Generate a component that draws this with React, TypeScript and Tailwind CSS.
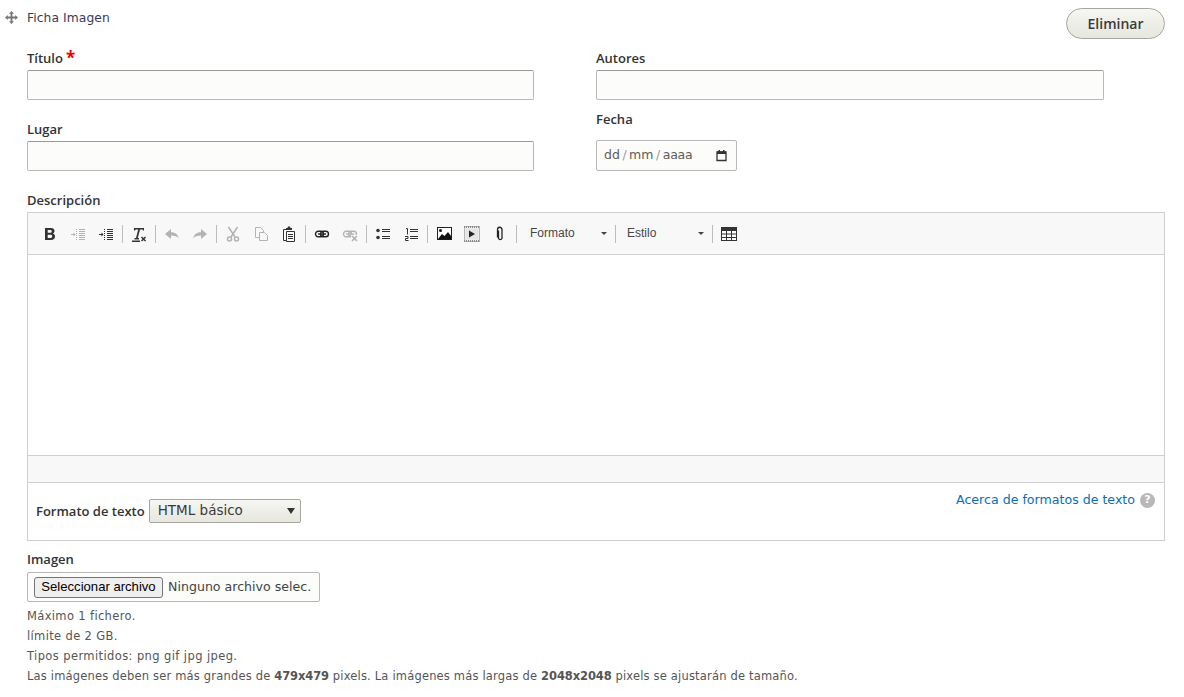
import React from "react";

const D = "#333";
const L = "#b3b3b3";
const BOLD = { fontFamily: "'Open Sans', 'DejaVu Sans', sans-serif" };

function Ico({ w = 16, h = 16, children }: { w?: number; h?: number; children: React.ReactNode }) {
  return (
    <svg width={w} height={h} viewBox={`0 0 ${w} ${h}`} className="block shrink-0">
      {children}
    </svg>
  );
}

const Sep = () => <div className="h-[18px] w-px mx-[2px] bg-[#bcbcbc] shrink-0" />;

const Bold = () => (
  <Ico>
    <path fillRule="evenodd" fill={D} d="M3 2h6c2.200 0 3.500 1.100 3.500 3 0 1.200-.6 2.100-1.700 2.600 1.400.4 2.200 1.400 2.200 2.900 0 2.200-1.500 3.500-4 3.500H3zM5.700 4.100v2.600h2.600c.9 0 1.400-.5 1.400-1.300s-.5-1.300-1.400-1.300zM5.700 8.800v3.100h2.900c1 0 1.600-.6 1.600-1.600s-.6-1.500-1.600-1.500z" />
  </Ico>
);

const Indent = ({ c, out }: { c: string; out?: boolean }) => (
  <Ico>
    <path stroke={c} strokeWidth="1" d="M9 3.500h6M9 5.500h6M9 7.500h6M9 9.500h6M9 11.500h6M9 13.500h6" />
    <path stroke={c} strokeWidth="1" strokeDasharray="1 1" d="M6.500 3v11" />
    <path stroke={c} strokeWidth="1" d="M1 8.500h4" />
    <path fill={c} d={out ? "M1 8.500L3 6.500v4z" : "M5.500 8.500L3.500 6.500v4z"} />
  </Ico>
);

const RemoveFormat = () => (
  <Ico>
    <path fill={D} d="M3 2h10v2.500h-1L11.500 3.500H9L6.800 12H8v1.500H3.500V12H5L7.200 3.500H4.700L4 4.500H3z" />
    <path stroke={D} strokeWidth="1.500" d="M10.500 11l4 4M14.500 11l-4 4" />
    <path fill={D} d="M1 14.500h8V16H1z" />
  </Ico>
);

const Undo = () => (
  <Ico>
    <path fill={L} d="M7 3v3.200c4.500 0 7 2.300 8 6.300-1.800-2.300-4.300-3-8-3V13L1 8z" />
  </Ico>
);
const Redo = () => (
  <Ico>
    <path fill={L} d="M9 3v3.200c-4.500 0-7 2.300-8 6.300 1.800-2.300 4.300-3 8-3V13l6-5z" />
  </Ico>
);
const Cut = () => (
  <Ico>
    <g fill="none" stroke={L} strokeWidth="1.500">
      <path d="M3.500 1l6.500 10M12.500 1L6 11" />
      <circle cx="4.500" cy="13" r="2" />
      <circle cx="11.500" cy="13" r="2" />
    </g>
  </Ico>
);
const Copy = () => (
  <Ico>
    <g fill="#f8f8f8" stroke={L} strokeWidth="1">
      <path d="M2.500 1.500h5l3 3v7h-8z" />
      <path d="M6.500 6.500h5l3 3v5h-8z" />
    </g>
  </Ico>
);
const Paste = () => (
  <Ico>
    <path fill="none" stroke={D} strokeWidth="1" d="M5 3.500H2.500v11H5" />
    <path fill={D} d="M5 2h1.500L7 .5h2l.5 1.500H11v2H5z" />
    <path fill="#f8f8f8" stroke={D} strokeWidth="1" d="M5.500 5.500h8v10h-8z" />
    <path stroke={D} strokeWidth="1" d="M7 8.500h5M7 10.500h5M7 12.500h5" />
  </Ico>
);
const Chain = ({ c }: { c: string }) => (
  <g fill="none" stroke={c} strokeWidth="1.400">
    <rect x="1.500" y="5.200" width="8" height="5.600" rx="2.800" />
    <rect x="6.500" y="5.200" width="8" height="5.600" rx="2.800" />
    <path d="M4 8h8" />
  </g>
);
const Link = () => (
  <Ico>
    <Chain c="#222" />
  </Ico>
);
const Unlink = () => (
  <Ico>
    <Chain c={L} />
    <rect x="9" y="9" width="7" height="7" fill="#f8f8f8" />
    <path stroke={L} strokeWidth="1.600" d="M10 10l5 5M15 10l-5 5" />
  </Ico>
);
const Bullets = () => (
  <Ico>
    <circle cx="3" cy="4.500" r="1.800" fill={D} />
    <circle cx="3" cy="11.500" r="1.800" fill={D} />
    <path stroke={D} strokeWidth="1.200" d="M7 3.500h8M7 5.500h8M7 10.500h8M7 12.500h8" />
  </Ico>
);
const Numbers = () => (
  <Ico>
    <path stroke={D} strokeWidth="1" fill="none" d="M3 2.500h1.500v6M2 10.500h3v2H2.500v2H5.500" />
    <path stroke={D} strokeWidth="1.200" d="M7 3.500h8M7 5.500h8M7 10.500h8M7 12.500h8" />
  </Ico>
);
const ImageIco = () => (
  <Ico w={15} h={13}>
    <rect x=".5" y=".5" width="14" height="12" fill="#fff" stroke="#222" />
    <path fill="#111" d="M1 12l4-5 2.500 2L11 5l3 4v3.500H1z" />
    <circle cx="3.500" cy="3.500" r="1.500" fill="#111" />
  </Ico>
);
const Video = () => (
  <Ico h={16}>
    <rect x=".5" y=".5" width="15" height="15" fill="#ececec" stroke="#b5b5b5" />
    <path stroke="#8a8a8a" strokeWidth="2" strokeDasharray="1 1" d="M0 1h16M0 15h16" />
    <rect x="2" y="3" width="12" height="10" fill="#e4e4e4" />
    <path fill="#222" d="M5 4.500v7l6-3.500z" />
  </Ico>
);
const Clip = () => (
  <Ico w={8} h={15}>
    <path fill="none" stroke="#222" strokeWidth="1.300" d="M2.500 4v8a2 2 0 0 0 3.500 0V3a2 2 0 0 0-4.500 0v8" transform="translate(0 .5)" />
  </Ico>
);
const TableIco = () => (
  <Ico>
    <rect x="0" y="1" width="16" height="14" fill={D} />
    <path fill="#fff" d="M1 5h4v2.500H1zM6 5h4v2.500H6zM11 5h4v2.500h-4zM1 8.500h4V11H1zM6 8.500h4V11H6zM11 8.500h4V11h-4zM1 12h4v2H1zM6 12h4v2H6zM11 12h4v2h-4z" />
  </Ico>
);
const Caret = () => <span className="w-0 h-0 border-l-[3.500px] border-r-[3.500px] border-t-[3.500px] border-l-transparent border-r-transparent border-t-[#444] shrink-0" />;

const Combo = ({ label, w }: { label: string; w: string }) => (
  <div className={`flex items-center justify-between pr-[6px] text-[12px] text-[#474747] ${w}`} style={{ fontFamily: "Arial, 'Liberation Sans', sans-serif" }}>
    <span className="mb-[2px]">{label}</span>
    <Caret />
  </div>
);

const Btn = ({ children }: { children: React.ReactNode }) => (
  <div className="w-[28px] h-[22px] flex items-center justify-center shrink-0">{children}</div>
);

const Label = ({ children }: { children: React.ReactNode }) => (
  <div className="font-semibold text-[13px] leading-[18px] text-[#333]" style={BOLD}>{children}</div>
);

const TextBox = () => (
  <div className="h-[30px] bg-[#fcfcfa] border border-[#b8b8b8] border-t-[#999] rounded-[2px]" />
);

export default function App() {
  return (
    <div
      className="w-[1184px] h-[697px] overflow-hidden bg-white text-[#333] text-[12.700px]"
      style={{ fontFamily: "'DejaVu Sans', 'Liberation Sans', sans-serif" }}
    >
      <div className="pl-[27px] pr-[19px]">
        {/* header */}
        <div className="relative flex items-start justify-between h-[49px] pt-[8px]">
          <div className="absolute left-[-22px] top-[11px]">
            <svg width="13" height="13" viewBox="0 0 13 13" className="block">
              <path fill="#777" d="M6.500 0L9 2.800H7.400V5.600h2.800V4L13 6.500 10.200 9V7.400H7.400v2.800H9L6.500 13 4 10.200h1.600V7.400H2.800V9L0 6.500 2.800 4v1.600h2.800V2.800H4z" />
            </svg>
          </div>
          <div className="pt-[1px] text-[12.300px] tracking-[.08px] leading-[18px] text-[#3b3b52]">Ficha Imagen</div>
          <div className="w-[99px] h-[31px] rounded-[16px] border border-[#a6a6a0] bg-gradient-to-b from-[#f6f6f3] to-[#e7e7df] flex items-center justify-center font-semibold text-[14px] text-[#3a3a3a] pb-[1px]" style={BOLD}>
            Eliminar
          </div>
        </div>

        {/* fields */}
        <div className="grid grid-cols-[507px_508px] gap-x-[62px]">
          <div>
            <div className="flex items-start gap-[3px]">
              <Label>Título</Label>
              <span className="text-[#e00] font-bold text-[17px] leading-[14px] mt-[2px]" style={BOLD}>*</span>
            </div>
            <div className="mt-[3px]"><TextBox /></div>
            <div className="mt-[20px]"><Label>Lugar</Label></div>
            <div className="mt-[3px]"><TextBox /></div>
          </div>
          <div>
            <Label>Autores</Label>
            <div className="mt-[3px]"><TextBox /></div>
            <div className="mt-[10px]"><Label>Fecha</Label></div>
            <div className="mt-[12px] w-[141px] h-[31px] bg-[#fcfcfa] border border-[#b8b8b8] rounded-[2px] flex items-center pl-[7px] pr-[2px] text-[12.500px] text-[#5c5c5c]">
              <span>dd</span>
              <span className="mx-[2.500px] text-[#999]">/</span>
              <span>mm</span>
              <span className="mx-[2.500px] text-[#999]">/</span>
              <span className="tracking-[-.2px]">aaaa</span>
              <svg width="11" height="13" viewBox="0 0 11 13" className="ml-auto mr-[7px]">
                <path fill="none" stroke="#333" strokeWidth="1.300" d="M1 3h9v8.500H1z" />
                <path fill="#333" d="M1 2.500h9V5H1zM2.500 1h1.500v2H2.500zM7 1h1.500v2H7z" />
              </svg>
            </div>
          </div>
        </div>

        {/* editor */}
        <div className="mt-[20px]"><Label>Descripción</Label></div>
        <div className="mt-[3px] border border-[#cfcfcf] h-[329px] flex flex-col">
          <div className="h-[42px] bg-[#f8f8f8] border-b border-[#d1d1d1] flex items-center pl-[8px] shrink-0">
            <Btn><Bold /></Btn>
            <Btn><Indent c={L} /></Btn>
            <Btn><Indent c={D} /></Btn>
            <Sep />
            <Btn><RemoveFormat /></Btn>
            <Sep />
            <Btn><Undo /></Btn>
            <Btn><Redo /></Btn>
            <Sep />
            <Btn><Cut /></Btn>
            <Btn><Copy /></Btn>
            <Btn><Paste /></Btn>
            <Sep />
            <Btn><Link /></Btn>
            <Btn><Unlink /></Btn>
            <Sep />
            <Btn><Bullets /></Btn>
            <Btn><Numbers /></Btn>
            <Sep />
            <Btn><ImageIco /></Btn>
            <Btn><Video /></Btn>
            <Btn><Clip /></Btn>
            <Sep />
            <Combo label="Formato" w="w-[94px] pl-[11px]" />
            <Sep />
            <Combo label="Estilo" w="w-[92px] pl-[9px]" />
            <Sep />
            <Btn><TableIco /></Btn>
          </div>
          <div className="h-[200px] bg-white shrink-0" />
          <div className="h-[28px] bg-[#f8f8f8] border-t border-b border-[#d1d1d1] shrink-0" />
          <div className="relative flex-1 pl-[8px] pr-[9px] flex items-start pt-[16px]">
            <span className="font-semibold text-[13px] leading-[24px] text-[#333] mr-[4px]" style={BOLD}>Formato de texto</span>
            <div className="w-[152px] h-[24px] rounded-[2px] border border-[#a6a6a0] bg-gradient-to-b from-[#f6f6f3] to-[#e7e7df] flex items-center justify-between pl-[8px] pr-[5px] text-[13.500px] text-[#3a3a3a]">
              <span className="mb-[2px]">HTML básico</span>
              <span className="w-0 h-0 border-l-[4px] border-r-[4px] border-t-[6px] border-l-transparent border-r-transparent border-t-[#333]" />
            </div>
            <div className="absolute right-[9px] top-[8px] flex items-center gap-[5px]">
              <span className="text-[#0a6eb4] text-[12.600px] leading-[18px]">Acerca de formatos de texto</span>
              <span className="w-[15px] h-[15px] rounded-full bg-[#b8b8b8] text-white font-bold text-[11px] flex items-center justify-center">?</span>
            </div>
          </div>
        </div>

        {/* image */}
        <div className="mt-[9px]"><Label>Imagen</Label></div>
        <div className="mt-[4px] w-[293px] h-[30px] border border-[#b8b8b8] bg-[#fcfcfa] rounded-[2px] flex items-center pl-[6px]">
          <div className="h-[21px] w-[129px] rounded-[3px] border border-[#767676] bg-[#efefef] flex items-center justify-center text-[13.100px] text-black" style={{ fontFamily: "Arial, 'Liberation Sans', sans-serif" }}>
            Seleccionar archivo
          </div>
          <span className="ml-[5px] text-[12.600px] text-[#444] whitespace-nowrap">Ninguno archivo selec.</span>
        </div>
        <div className="mt-[4px] text-[11.500px] leading-[20px] text-[#555]">
          <div className="tracking-[.35px]">Máximo 1 fichero.</div>
          <div className="tracking-[.35px]">límite de 2 GB.</div>
          <div className="tracking-[.4px]">Tipos permitidos: png gif jpg jpeg.</div>
          <div className="tracking-[.18px]">
            Las imágenes deben ser más grandes de <b className="tracking-[-.1px] text-[#555]">479x479</b> pixels. La imágenes más largas de <b className="tracking-[-.1px] text-[#555]">2048x2048</b> pixels se ajustarán de tamaño.
          </div>
        </div>
      </div>
    </div>
  );
}
